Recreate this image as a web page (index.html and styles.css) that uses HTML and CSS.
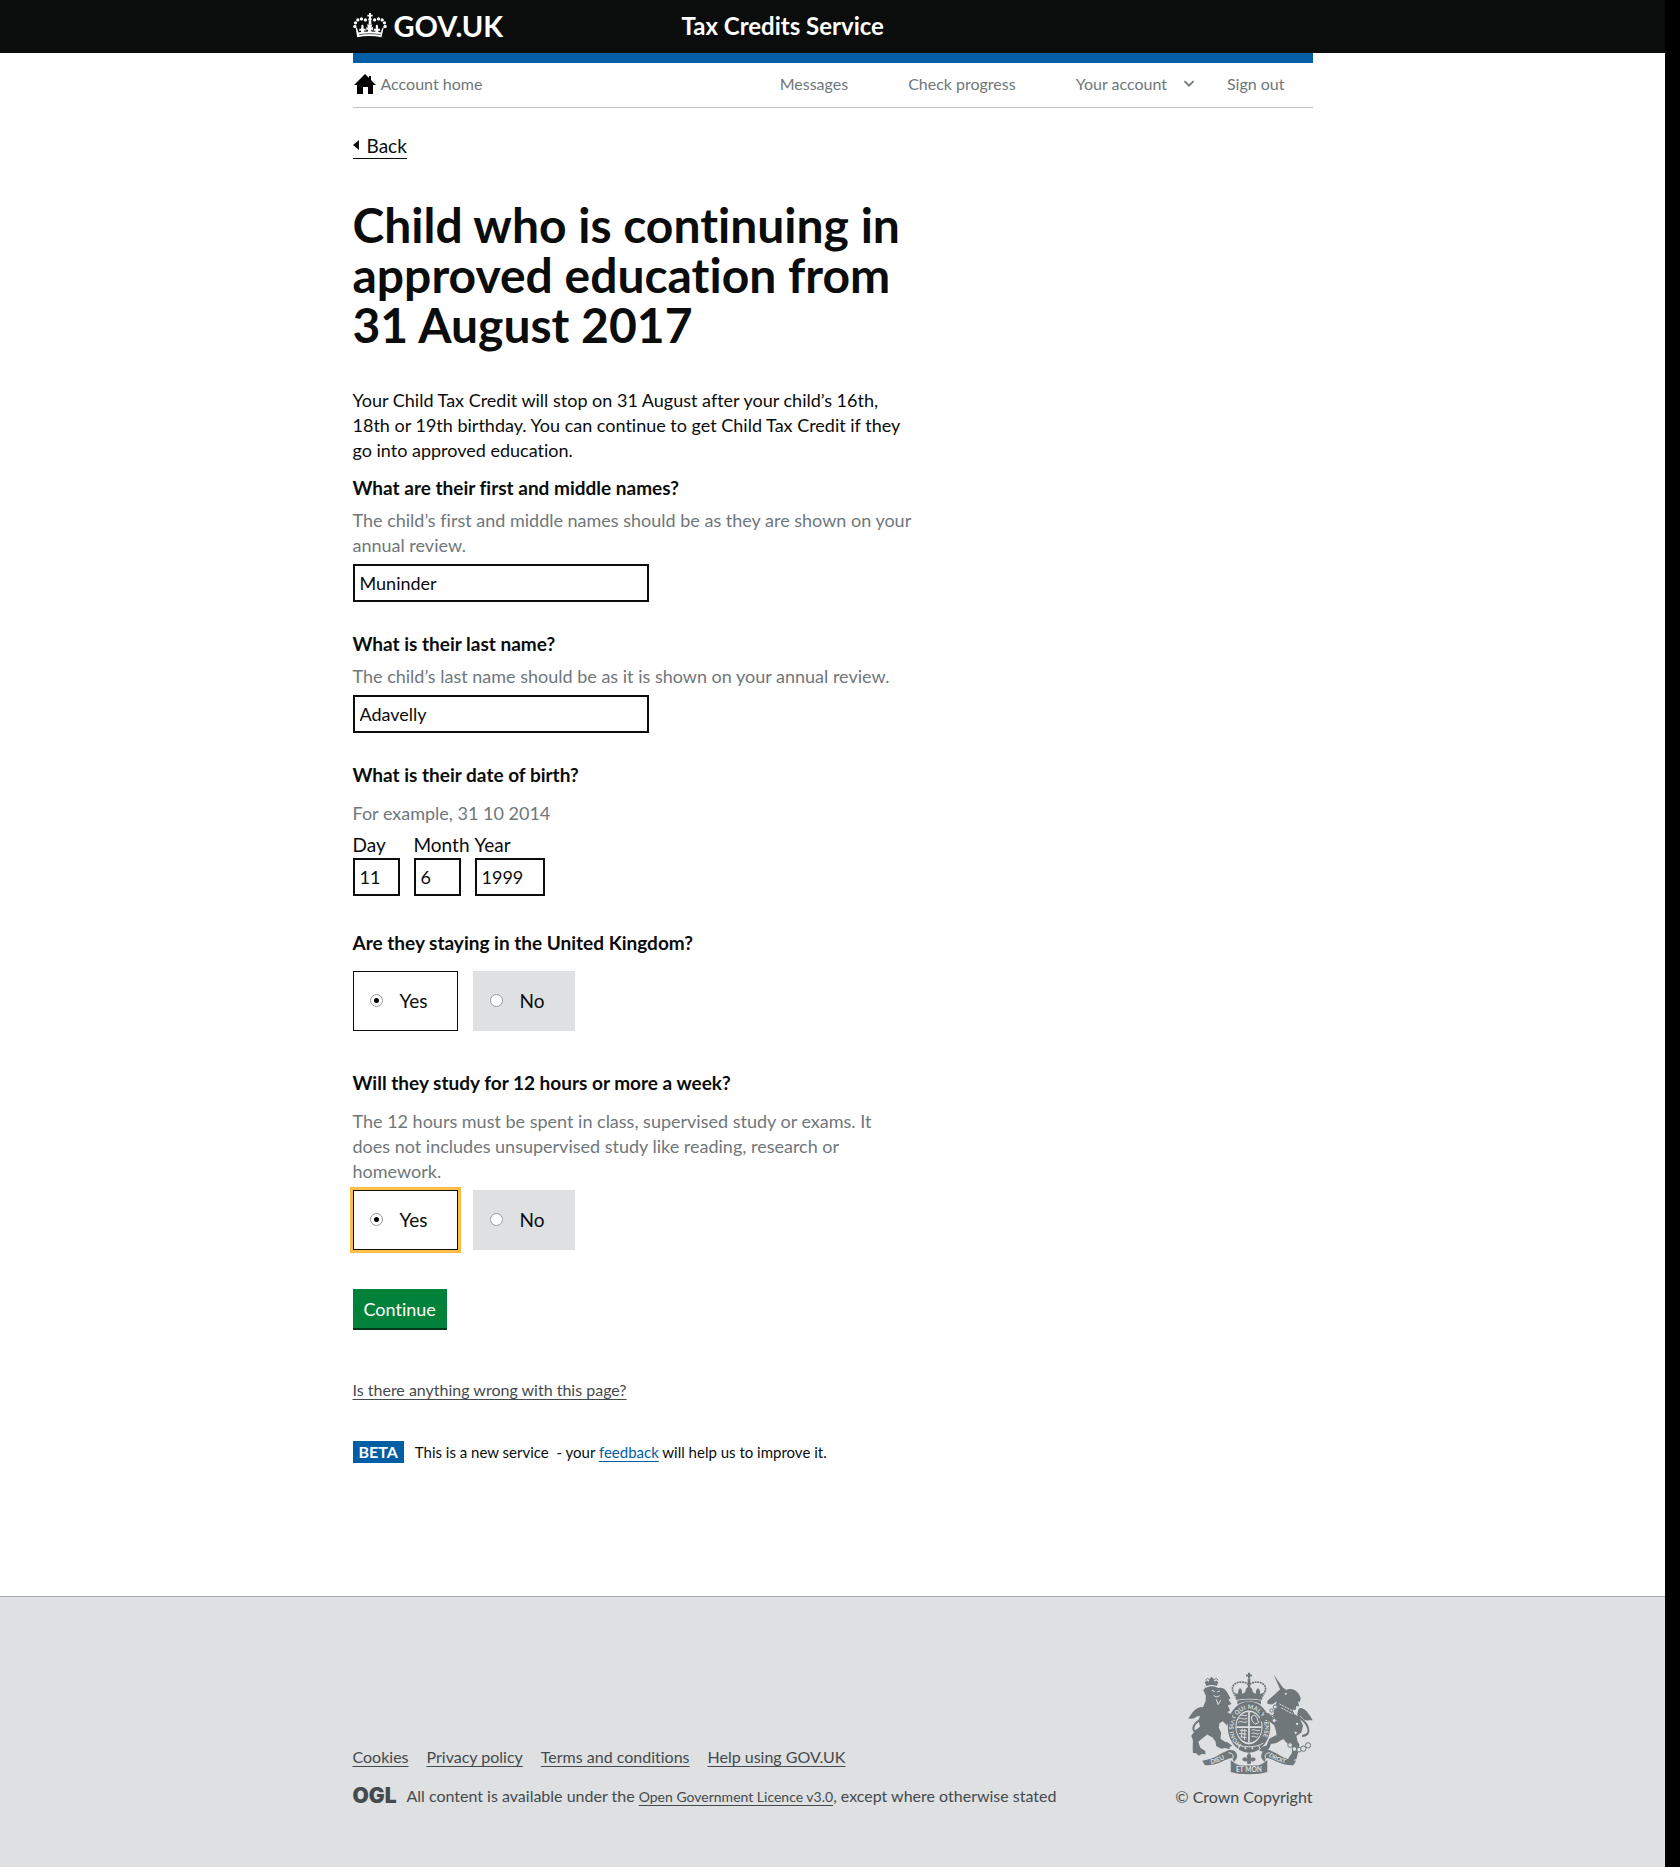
FILE: index.html
```html
<!DOCTYPE html>
<html lang="en">
<head>
<meta charset="utf-8">
<meta name="viewport" content="width=device-width, initial-scale=1">
<title>Child who is continuing in approved education</title>
<link rel="stylesheet" href="styles.css">
</head>
<body>
<header class="masthead">
  <div class="container masthead-row">
    <a class="logo" href="#">
      <svg class="logo-crown" viewBox="10 24 102 76" aria-hidden="true" fill="#fff">
        <path d="M58 24h6v5h5v6h-5v5h-6v-5h-5v-6h5z"/>
        <circle cx="61" cy="43" r="5"/><circle cx="47" cy="45" r="5"/><circle cx="35" cy="42" r="5"/><circle cx="24" cy="45" r="5"/><circle cx="17" cy="54" r="5"/><circle cx="15" cy="65" r="5"/>
        <circle cx="75" cy="45" r="5"/><circle cx="87" cy="42" r="5"/><circle cx="98" cy="45" r="5"/><circle cx="105" cy="54" r="5"/><circle cx="107" cy="65" r="5"/>
        <path d="M57 47h8v12h-8z"/>
        <path d="M17 66c5 3 6 8 9 17l8-1-1-5-5 2 1-8 5 2 1-11 3-3 3 3 1 11 5-2 1 8-5-2v4l12-1v-6l-5 3v-11l5 3-3-10h16l-3 10 5-3v11l-5-3v6l12 1v-4l-5 2 1-8 5 2 1-11 3-3 3 3 1 11 5-2 1 8-5-2-1 5 8 1c3-9 4-14 9-17l-7 32c-24-5-50-5-74 0z"/>
        <path d="M28 90c22-4 44-4 66 0" fill="none" stroke="#0b0c0c" stroke-width="2"/>
      </svg>
      <span class="logo-text">GOV.UK</span>
    </a>
    <a class="service-name" href="#">Tax Credits Service</a>
  </div>
</header>

<div class="container account-nav">
  <a class="nav-home" href="#">
    <svg class="home-icon" viewBox="0 0 22 20" aria-hidden="true"><path d="M11 0l4 4V2h2v4l5 5h-3v9h-5v-7H9v7H3v-9H0z"/></svg>
    Account home
  </a>
  <nav class="nav-links" aria-label="Account">
    <a href="#">Messages</a>
    <a href="#">Check progress</a>
    <a class="nav-account" href="#">Your account
      <svg class="chevron" viewBox="0 0 10 7" aria-hidden="true"><path d="M1 1l4 4 4-4" fill="none" stroke="#6f777b" stroke-width="1.5"/></svg>
    </a>
    <a href="#">Sign out</a>
  </nav>
</div>

<main class="container content">
  <a class="back-link" href="#">Back</a>
  <div class="column">
    <h1>Child who is continuing in approved education from 31&nbsp;August 2017</h1>
    <p class="intro">Your Child Tax Credit will stop on 31 August after your child’s 16th, 18th or 19th birthday. You can continue to get Child Tax Credit if they go into approved education.</p>

    <form>
      <div class="group">
        <label class="question" for="first-name">What are their first and middle names?</label>
        <p class="hint" id="first-name-hint">The child’s first and middle names should be as they are shown on your annual review.</p>
        <input class="text-input" id="first-name" type="text" value="Muninder" aria-describedby="first-name-hint">
      </div>

      <div class="group">
        <label class="question" for="last-name">What is their last name?</label>
        <p class="hint" id="last-name-hint">The child’s last name should be as it is shown on your annual review.</p>
        <input class="text-input" id="last-name" type="text" value="Adavelly" aria-describedby="last-name-hint">
      </div>

      <fieldset class="group date-group">
        <legend class="question spaced">What is their date of birth?</legend>
        <p class="hint">For example, 31 10 2014</p>
        <div class="date-row">
          <div class="date-item"><label for="day">Day</label><input class="text-input" id="day" type="text" value="11"></div>
          <div class="date-item"><label for="month">Month</label><input class="text-input" id="month" type="text" value="6"></div>
          <div class="date-item year"><label for="year">Year</label><input class="text-input" id="year" type="text" value="1999"></div>
        </div>
      </fieldset>

      <fieldset class="group choices">
        <legend class="question legend-choices">Are they staying in the United Kingdom?</legend>
        <div class="choice-row">
          <label class="choice selected"><input type="radio" name="uk" checked>Yes</label>
          <label class="choice"><input type="radio" name="uk">No</label>
        </div>
      </fieldset>

      <fieldset class="group choices">
        <legend class="question spaced">Will they study for 12 hours or more a week?</legend>
        <p class="hint">The 12 hours must be spent in class, supervised study or exams. It does not includes unsupervised study like reading, research or homework.</p>
        <div class="choice-row">
          <label class="choice selected focused"><input type="radio" name="study" checked>Yes</label>
          <label class="choice"><input type="radio" name="study">No</label>
        </div>
      </fieldset>

      <button class="button" type="button">Continue</button>
    </form>
  </div>

  <a class="report-link" href="#">Is there anything wrong with this page?</a>
  <div class="beta-row">
    <strong class="beta-tag">BETA</strong>
    <span class="beta-text">This is a new service &nbsp;- your <a href="#">feedback</a> will help us to improve it.</span>
  </div>
</main>

<footer class="footer">
  <div class="container footer-row">
    <div class="footer-meta">
      <ul class="footer-links">
        <li><a href="#">Cookies</a></li>
        <li><a href="#">Privacy policy</a></li>
        <li><a href="#">Terms and conditions</a></li>
        <li><a href="#">Help using GOV.UK</a></li>
      </ul>
      <div class="licence">
        <span class="ogl">OGL</span>
        <p>All content is available under the <a href="#">Open Government Licence v3.0</a>, except where otherwise stated</p>
      </div>
    </div>
    <a class="copyright" href="#">
      <svg class="arms" viewBox="83 64 377 310" aria-hidden="true" fill="#6f777b">
        <!-- crown -->
        <path d="M264 66h6v5h6v6h-6v6h-6v-6h-6v-6h6z"/>
        <path d="M230 144c-8-18-18-26-10-40 10-13 32-12 44-4h6c12-8 34-9 44 4 8 14-2 22-10 40" fill="none" stroke="#6f777b" stroke-width="5" stroke-dasharray="6 2"/>
        <path d="M263 84h8v24h-8zM229 138l-6-12 10 4 2-12 5-6 5 6 2 12 8-5 3-11 9-8 9 8 3 11 8 5 2-12 5-6 5 6 2 12 10-4-6 12 1 10c-25-5-53-5-78 0z"/>
        <path d="M232 150c23-5 48-5 71 0v12c-20-13-50-13-71 0z"/>
        <!-- shield and garter -->
        <path fill-rule="evenodd" d="M267 153c35 0 64 34 64 76s-29 78-64 78-64-36-64-78 29-76 64-76zm0 27c-22 0-41 21-41 49s19 53 41 53 41-25 41-53-19-49-41-49z"/>
        <ellipse cx="267" cy="230" rx="38" ry="46"/>
        <path d="M267 184v92M229 230h76" stroke="#dee0e2" stroke-width="5"/>
        <path d="M235 205c9-6 14 5 27-2M235 215c9-6 14 5 27-2M241 195c6-5 12 4 20-1M274 199l10-6 7 9 5 14-10 5-9-9zM239 239l22 2M237 249l22 2M242 259l17 3M246 235l-2 27M254 235v34M275 239c8-6 15 6 25 0M275 249c8-6 15 6 23 0M275 259c7-6 12 5 18 0" fill="none" stroke="#dee0e2" stroke-width="3"/>
        <path id="garter" d="M245 281A47 56 0 1 1 289 281" fill="none"/>
        <text class="motto" font-size="18" fill="#dee0e2"><textPath href="#garter">HONI SOIT QUI MAL Y PENSE</textPath></text>
        <path d="M224 278c17 15 67 15 86 0M239 286l-6 12M296 286l6 12" fill="none" stroke="#dee0e2" stroke-width="3"/>
        <circle cx="256" cy="294" r="3" fill="#dee0e2"/><circle cx="277" cy="294" r="3" fill="#dee0e2"/>
        <!-- lion -->
        <path d="M138 106l-4-12 6-5 5 4 4-10h3v-4h4v4h3l4 10 5-4 6 5-4 12c-10-4-22-4-32 0z"/>
        <path d="M136 88l6-5 6 4 7-5 7 5 6-4 6 5" fill="none" stroke="#6f777b" stroke-width="3"/>
        <path d="M136 112c12-7 26-7 38 0 12-3 22 3 27 13l10 18-6 4 9 13-11 5 7 14-8 6 13 7 4 19-8 1 5 10-12-4-4 6-12-12-10 6-2 14 7 16-2 17 12 8 12 4 11 9-8 5 1 6-14-4-12 2-15-8-2-14-9-12-16-9-15 12-12 10 6 18 15 10 1 10-12-1-8 5-9-7-9-1-1-14 1-24-5-14 12-17 14-10-4-19 8-29 13-29 1-17-8-16 7-9-6-5z"/>
        <path d="M155 119l9 4M171 124l8-3M160 135l10 4 9-4M168 146l6 16 8-14" stroke="#dee0e2" stroke-width="3" fill="none"/>
        <path d="M118 248c-29-3-20-26-3-37 12-9 19-20 11-35" fill="none" stroke="#6f777b" stroke-width="6"/>
        <path d="M127 169c-20 1-28 11-43 36 14-1 18 0 25-7 16 0 23-11 25-18z"/>
        <!-- unicorn -->
        <path d="M341 71l32 45-10 5z"/>
        <path d="M362 115l9-3 8 5 10-2c17-1 30 11 34 29l-3 10-5-2 3 15-8-1-3 13-8-2 4 13 15 9 12 27-5 20-15 11 3 15 6 10-2 18-7 26-9 3 2 13-14-2-12-1 9-15 10-15 3-17-18-14-11-12-20 12-17 3-6 15-15 9-14-4 7-11 15-5 8-20 22-11-2-14-5-16-13-10-12-7-6 9-16-7 7-14 8 2 5-11 13 3 11 6 4-22 7-21-14 10-14-2-1-9 18-16z"/>
        <circle cx="378" cy="129" r="3" fill="#dee0e2"/>
        <path d="M359 160l45 24M364 172l35 18M330 190l22 22" stroke="#dee0e2" stroke-width="3" fill="none" stroke-dasharray="6 3"/>
        <path d="M427 257c38-5 11-43-3-52-13-12-9-23 2-27" fill="none" stroke="#6f777b" stroke-width="6"/>
        <path d="M421 172c13-1 27 16 38 37-16 0-24 5-35-11-12-8-12-20-3-26z"/>
        <g fill="#dee0e2" stroke="#6f777b" stroke-width="3"><circle cx="346" cy="169" r="6"/><circle cx="335" cy="180" r="5"/><circle cx="343" cy="210" r="6"/><circle cx="412" cy="220" r="5"/><circle cx="408" cy="247" r="5"/><circle cx="391" cy="284" r="7"/><circle cx="404" cy="296" r="7"/><circle cx="418" cy="298" r="7"/><circle cx="431" cy="295" r="8"/><circle cx="445" cy="285" r="8"/></g>
        <!-- ribbon -->
        <path d="M126 331c39-4 54-23 79-31 18-4 28 7 26 22l-9 13-7-12c-20 2-43 24-81 22zM409 331c-39-4-54-23-79-31-18-4-28 7-26 22l9 13 7-12c20 2 43 24 81 22z"/>
        <path d="M212 329c11 11 21 16 36 17h38c15-1 25-6 36-17v36c-26 9-84 9-110 0z"/>
        <path d="M205 307c14 2 18 8 11 22M330 307c-14 2-18 8-11 22" stroke="#dee0e2" stroke-width="3" fill="none"/>
        <path d="M267 308c10 9 7 14 3 20 7-11 17-8 17 1l-8 5-5-3-2 10h-10l-2-10-5 3-8-5c0-9 10-12 17-1-4-6-7-11 3-20z"/>
        <path id="ribbon-left" d="M152 341c22-4 39-14 56-24" fill="none"/>
        <path id="ribbon-right" d="M326 317c17 13 35 20 62 25" fill="none"/>
        <g class="motto" fill="#dee0e2"><text font-size="19"><textPath href="#ribbon-left">DIEU</textPath></text><text font-size="18"><textPath href="#ribbon-right">DROIT</textPath></text><text x="267" y="366" font-size="20" text-anchor="middle">ET MON</text></g>
      </svg>
      © Crown Copyright
    </a>
  </div>
</footer>
</body>
</html>
```
FILE: styles.css
```css
* { box-sizing: border-box; }

html { background: #000; }

body {
  display: flex;
  flex-direction: column;
  min-height: 100vh;
  margin: 0 15px 0 0;
  background: #fff;
  color: #0b0c0c;
  font: 19px/25px Lato, "Liberation Sans", sans-serif;
  font-variant-ligatures: none;
  text-underline-offset: 3px;
}

h1, p, ul, fieldset, legend { margin: 0; padding: 0; }
fieldset { border: 0; min-width: 0; }

.container {
  width: 100%;
  max-width: 960px;
  margin: 0 auto;
}

/* Masthead */
.masthead { background: #0b0c0c; }
.masthead-row {
  display: grid;
  grid-template-columns: 329px 1fr;
  align-items: center;
  height: 53px;
  padding-bottom: 2px;
}
.masthead a { color: #fff; text-decoration: none; font-weight: 700; }
.logo { display: flex; align-items: center; gap: 7px; }
.logo-crown { width: 34px; height: 25px; }
.logo-text { font-size: 29px; line-height: 30px; }
.service-name { font-size: 24px; line-height: 30px; }

/* Account navigation */
.account-nav {
  display: flex;
  justify-content: space-between;
  align-items: center;
  height: 55px;
  padding-bottom: 2px;
  border-top: 10px solid #005ea5;
  border-bottom: 1px solid #bfc1c3;
  font-size: 16px;
  line-height: 20px;
}
.account-nav a { color: #6f777b; text-decoration: none; }
.nav-home { display: flex; align-items: center; gap: 5px; }
.home-icon { width: 22px; height: 20px; margin-left: 1px; fill: #000; }
.nav-links { display: flex; gap: 60px; padding-right: 28px; }
.nav-account { display: flex; align-items: center; gap: 16px; margin-right: -28px; }
.chevron { width: 12px; height: 8px; }

/* Page content */
.content { padding: 22px 0 133px; }
.back-link {
  display: inline-flex;
  align-items: center;
  gap: 8px;
  border-bottom: 1px solid #0b0c0c;
  color: #0b0c0c;
  text-decoration: none;
}
.back-link::before {
  content: "";
  border: 5px solid transparent;
  border-right: 6px solid #0b0c0c;
  border-left: 0;
}
.column { max-width: 560px; }

h1 {
  margin: 41px 0 38px;
  font-size: 48px;
  line-height: 50px;
  font-weight: 700;
}
.intro { margin-bottom: 12px; font-size: 18px; }

.group { margin-bottom: 29px; }
.question { display: block; margin-bottom: 8px; font-weight: 700; }
.spaced { margin-bottom: 14px; }
.legend-choices { margin-bottom: 16px; }
.hint { margin-bottom: 6px; color: #6f777b; font-size: 18px; }

.text-input {
  display: block;
  width: 296px;
  height: 38px;
  padding: 4px 5px;
  border: 2px solid #0b0c0c;
  border-radius: 0;
  background: #fff;
  color: #0b0c0c;
  font: inherit;
  font-size: 18px;
}
.date-group { margin-bottom: 34px; }
.date-row { display: flex; gap: 14px; }
.date-item { width: 47px; }
.date-item label { display: block; margin-bottom: 1px; }
.date-item .text-input { width: 100%; }
.date-item.year { width: 70px; }

.choices { margin-bottom: 39px; }
.choice-row { display: flex; gap: 15px; }
.choice {
  display: flex;
  align-items: center;
  gap: 17px;
  height: 60px;
  padding: 0 29px 0 16px;
  border: 1px solid #dee0e2;
  background: #dee0e2;
}
.choice.selected { border-color: #0b0c0c; background: #fff; }
.choice.focused { outline: 3px solid #ffbf47; }
.choice input {
  appearance: none;
  display: grid;
  place-items: center;
  width: 13px;
  height: 13px;
  margin: 0;
  border: 1px solid #9a9a9a;
  border-radius: 50%;
  background: #fff;
}
.choice input:checked::before {
  content: "";
  width: 5px;
  height: 5px;
  border-radius: 50%;
  background: #000;
}

.button {
  display: block;
  height: 39px;
  padding: 2px 11px 0;
  border: 0;
  background: #00823b;
  box-shadow: 0 2px 0 #003618;
  color: #fff;
  font: inherit;
  font-size: 18px;
}

.report-link {
  display: table;
  margin: 52px 0 41px;
  color: #454a4c;
  font-size: 16px;
  line-height: 20px;
}
.beta-row {
  display: flex;
  align-items: center;
  gap: 11px;
  line-height: 20px;
}
.beta-text { font-size: 15px; }
.beta-row a { color: #005ea5; }
.beta-tag {
  padding: 1px 6px;
  background: #005ea5;
  color: #fff;
  font-size: 16px;
}

/* Footer */
.footer {
  flex: 1;
  padding: 75px 0 60px;
  border-top: 1px solid #a1acb2;
  background: #dee0e2;
  color: #454a4c;
  font-size: 16px;
  line-height: 20px;
}
.footer a { color: #454a4c; }
.footer-row { display: flex; justify-content: space-between; align-items: flex-end; }
.footer-links { display: flex; gap: 18px; margin-bottom: 19px; list-style: none; }
.licence { display: flex; align-items: center; gap: 10px; }
.licence a { font-size: 14px; }
.ogl { font: 900 21px/20px Inter, sans-serif; }
.copyright {
  display: flex;
  flex-direction: column;
  align-items: flex-end;
  gap: 12px;
}
.footer .copyright { text-decoration: none; }
.arms { width: 125px; height: 103px; }
.motto { font-family: Lato, sans-serif; font-weight: 700; }
```
